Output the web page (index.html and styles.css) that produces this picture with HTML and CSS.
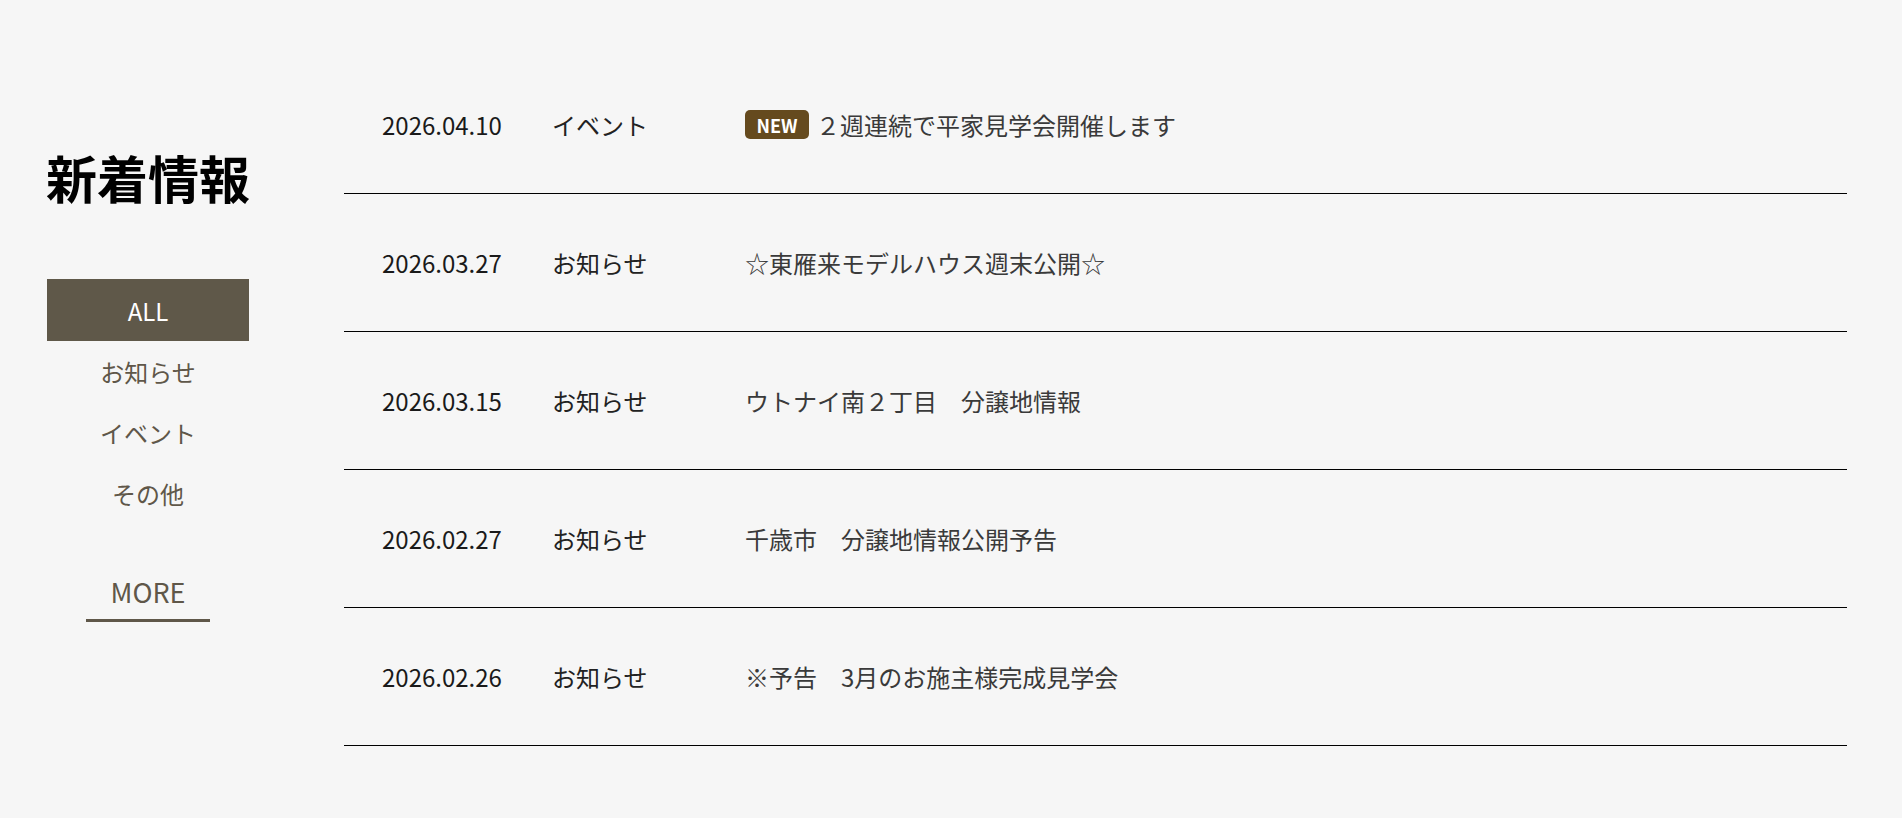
FILE: index.html
```html
<!DOCTYPE html>
<html lang="ja">
<head>
<meta charset="utf-8">
<title>新着情報</title>
<link rel="stylesheet" href="styles.css">
</head>
<body>
<div class="page">
  <aside class="side">
    <h2 class="side-title">新着情報</h2>
    <ul class="cats">
      <li class="cat active">ALL</li>
      <li class="cat">お知らせ</li>
      <li class="cat">イベント</li>
      <li class="cat">その他</li>
    </ul>
    <a class="more" href="#">MORE</a>
  </aside>
  <ul class="news">
    <li class="row">
      <span class="date">2026.04.10</span>
      <span class="kind">イベント</span>
      <span class="title"><span class="badge">NEW</span>２週連続で平家見学会開催します</span>
    </li>
    <li class="row">
      <span class="date">2026.03.27</span>
      <span class="kind">お知らせ</span>
      <span class="title">☆東雁来モデルハウス週末公開☆</span>
    </li>
    <li class="row">
      <span class="date">2026.03.15</span>
      <span class="kind">お知らせ</span>
      <span class="title">ウトナイ南２丁目　分譲地情報</span>
    </li>
    <li class="row">
      <span class="date">2026.02.27</span>
      <span class="kind">お知らせ</span>
      <span class="title">千歳市　分譲地情報公開予告</span>
    </li>
    <li class="row">
      <span class="date">2026.02.26</span>
      <span class="kind">お知らせ</span>
      <span class="title">※予告　3月のお施主様完成見学会</span>
    </li>
  </ul>
</div>
</body>
</html>
```
FILE: styles.css
```css
* { box-sizing: border-box; }
html, body { margin: 0; padding: 0; }
body {
  background: #f6f6f6;
  font-family: "Noto Sans CJK JP", "Noto Sans", sans-serif;
  color: #222;
}
.page {
  display: flex;
  align-items: flex-start;
  padding: 56px 55px 0 46px;
}
.side {
  width: 203px;
  flex: none;
  display: flex;
  flex-direction: column;
  align-items: center;
  padding-top: 96px;
}
.side-title {
  margin: 0;
  font-size: 51px;
  line-height: 51px;
  font-weight: 700;
  color: #000;
  white-space: nowrap;
  align-self: flex-start;
}
.cats {
  list-style: none;
  margin: 76px 0 0 1px;
  padding: 0;
  width: 202px;
}
.cat {
  height: 61px;
  display: flex;
  align-items: center;
  justify-content: center;
  font-size: 24px;
  color: #5f5749;
}
.cat.active {
  height: 62px;
  background: #5f5849;
  color: #fff;
}
.more {
  margin: 41px 0 0 1px;
  width: 124px;
  text-align: center;
  font-size: 27px;
  line-height: 54px;
  color: #5f5749;
  text-decoration: none;
  border-bottom: 3px solid #5f5749;
}
.news {
  list-style: none;
  margin: 0 0 0 95px;
  padding: 0;
  flex: 1;
}
.row {
  height: 138px;
  border-bottom: 1px solid #000;
  display: flex;
  align-items: center;
  padding-left: 38px;
  font-size: 24px;
}
.date {
  width: 170px;
  flex: none;
  color: #1a1a1a;
}
.kind {
  width: 193px;
  flex: none;
  color: #222;
}
.title {
  display: flex;
  align-items: center;
  color: #3a3a3a;
}
.badge {
  display: inline-flex;
  align-items: center;
  justify-content: center;
  width: 64px;
  height: 29px;
  margin-right: 7px;
  border-radius: 5px;
  background: #654a1e;
  color: #fff;
  font-size: 18px;
  font-weight: 700;
}
```
